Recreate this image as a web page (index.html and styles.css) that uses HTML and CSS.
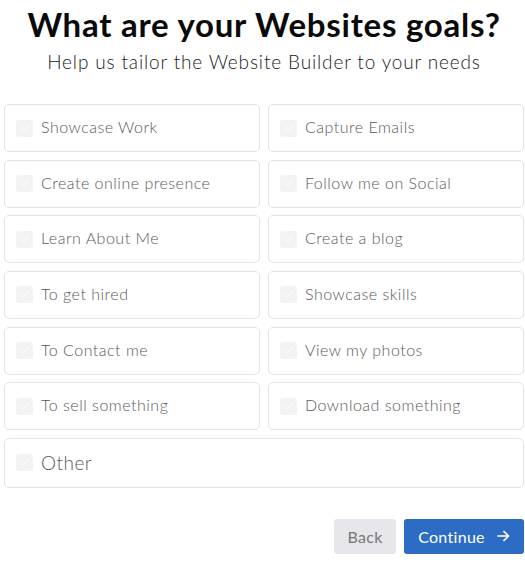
FILE: index.html
```html
<!DOCTYPE html>
<html>
<head>
<meta charset="utf-8">
<link rel="stylesheet" href="styles.css">
</head>
<body>
<div class="page">
  <h1 class="title">What are your Websites goals?</h1>
  <p class="subtitle">Help us tailor the Website Builder to your needs</p>
  <div class="grid">
    <label class="card"><span class="box"><svg viewBox="0 0 17 17"><path d="M5 8.8l2.4 2.3 4.6-4.9"/></svg></span><span class="label">Showcase Work</span></label>
    <label class="card"><span class="box"><svg viewBox="0 0 17 17"><path d="M5 8.8l2.4 2.3 4.6-4.9"/></svg></span><span class="label">Capture Emails</span></label>
    <label class="card"><span class="box"><svg viewBox="0 0 17 17"><path d="M5 8.8l2.4 2.3 4.6-4.9"/></svg></span><span class="label">Create online presence</span></label>
    <label class="card"><span class="box"><svg viewBox="0 0 17 17"><path d="M5 8.8l2.4 2.3 4.6-4.9"/></svg></span><span class="label">Follow me on Social</span></label>
    <label class="card"><span class="box"><svg viewBox="0 0 17 17"><path d="M5 8.8l2.4 2.3 4.6-4.9"/></svg></span><span class="label">Learn About Me</span></label>
    <label class="card"><span class="box"><svg viewBox="0 0 17 17"><path d="M5 8.8l2.4 2.3 4.6-4.9"/></svg></span><span class="label">Create a blog</span></label>
    <label class="card"><span class="box"><svg viewBox="0 0 17 17"><path d="M5 8.8l2.4 2.3 4.6-4.9"/></svg></span><span class="label">To get hired</span></label>
    <label class="card"><span class="box"><svg viewBox="0 0 17 17"><path d="M5 8.8l2.4 2.3 4.6-4.9"/></svg></span><span class="label">Showcase skills</span></label>
    <label class="card"><span class="box"><svg viewBox="0 0 17 17"><path d="M5 8.8l2.4 2.3 4.6-4.9"/></svg></span><span class="label">To Contact me</span></label>
    <label class="card"><span class="box"><svg viewBox="0 0 17 17"><path d="M5 8.8l2.4 2.3 4.6-4.9"/></svg></span><span class="label">View my photos</span></label>
    <label class="card"><span class="box"><svg viewBox="0 0 17 17"><path d="M5 8.8l2.4 2.3 4.6-4.9"/></svg></span><span class="label">To sell something</span></label>
    <label class="card"><span class="box"><svg viewBox="0 0 17 17"><path d="M5 8.8l2.4 2.3 4.6-4.9"/></svg></span><span class="label">Download something</span></label>
    <label class="card card-wide"><span class="box"><svg viewBox="0 0 17 17"><path d="M5 8.8l2.4 2.3 4.6-4.9"/></svg></span><span class="label label-big">Other</span></label>
  </div>
  <div class="actions">
    <button class="btn btn-back">Back</button>
    <button class="btn btn-continue">Continue <svg class="arrow" viewBox="0 0 14 12"><path d="M1 6h11.5M7.5 1.2L12.5 6l-5 4.8"/></svg></button>
  </div>
</div>
</body>
</html>
```

FILE: styles.css
```css
* { box-sizing: border-box; }
html, body { margin: 0; padding: 0; background: #fff; }
body { font-family: Lato, "Open Sans", sans-serif; color: #111; }
.page { padding: 0 1px 0 4px; }
.title {
  margin: 0;
  padding-top: 4px;
  font-size: 33px;
  line-height: 40px;
  font-weight: 700;
  letter-spacing: 0.75px;
  text-align: center;
  color: #0a0a0a;
}
.subtitle {
  margin: 6px 0 0;
  font-size: 19px;
  line-height: 24px;
  font-weight: 300;
  letter-spacing: 0.85px;
  text-align: center;
  color: #1a1a1a;
}
.grid {
  margin-top: 30px;
  display: grid;
  grid-template-columns: 1fr 1fr;
  column-gap: 8px;
  row-gap: 7.67px;
}
.card {
  height: 48px;
  border: 1px solid #e2e2e2;
  border-radius: 5px;
  display: flex;
  align-items: center;
  padding-left: 11px;
  background: #fff;
}
.card-wide { grid-column: 1 / 3; height: 50px; }
.box {
  width: 17px;
  height: 17px;
  border-radius: 3px;
  background: #f3f3f3;
  flex: none;
  display: flex;
}
.box svg { width: 17px; height: 17px; fill: none; stroke: #fbfbfb; stroke-width: 1.4; stroke-linecap: round; stroke-linejoin: round; }
.label {
  margin-left: 8px;
  margin-bottom: 3px;
  font-size: 16px;
  font-weight: 300;
  letter-spacing: 0.5px;
  color: #5a5a5a;
}
.label-big { font-size: 19px; letter-spacing: 0.5px; margin-bottom: 0; }
.actions {
  margin-top: 31px;
  display: flex;
  justify-content: flex-end;
  gap: 8px;
}
.btn {
  height: 35px;
  border: none;
  border-radius: 3px;
  font-family: inherit;
  font-size: 16px;
  font-weight: 400;
  letter-spacing: 0.3px;
  padding: 0;
  display: flex;
  align-items: center;
  justify-content: center;
}
.btn-back { width: 62px; background: #e7e7eb; color: #777; }
.btn-continue { width: 120px; background: #2d6cc4; color: #fff; gap: 12px; }
.arrow { width: 13px; height: 12px; fill: none; stroke: #fff; stroke-width: 1.8; stroke-linecap: round; stroke-linejoin: round; }
```
